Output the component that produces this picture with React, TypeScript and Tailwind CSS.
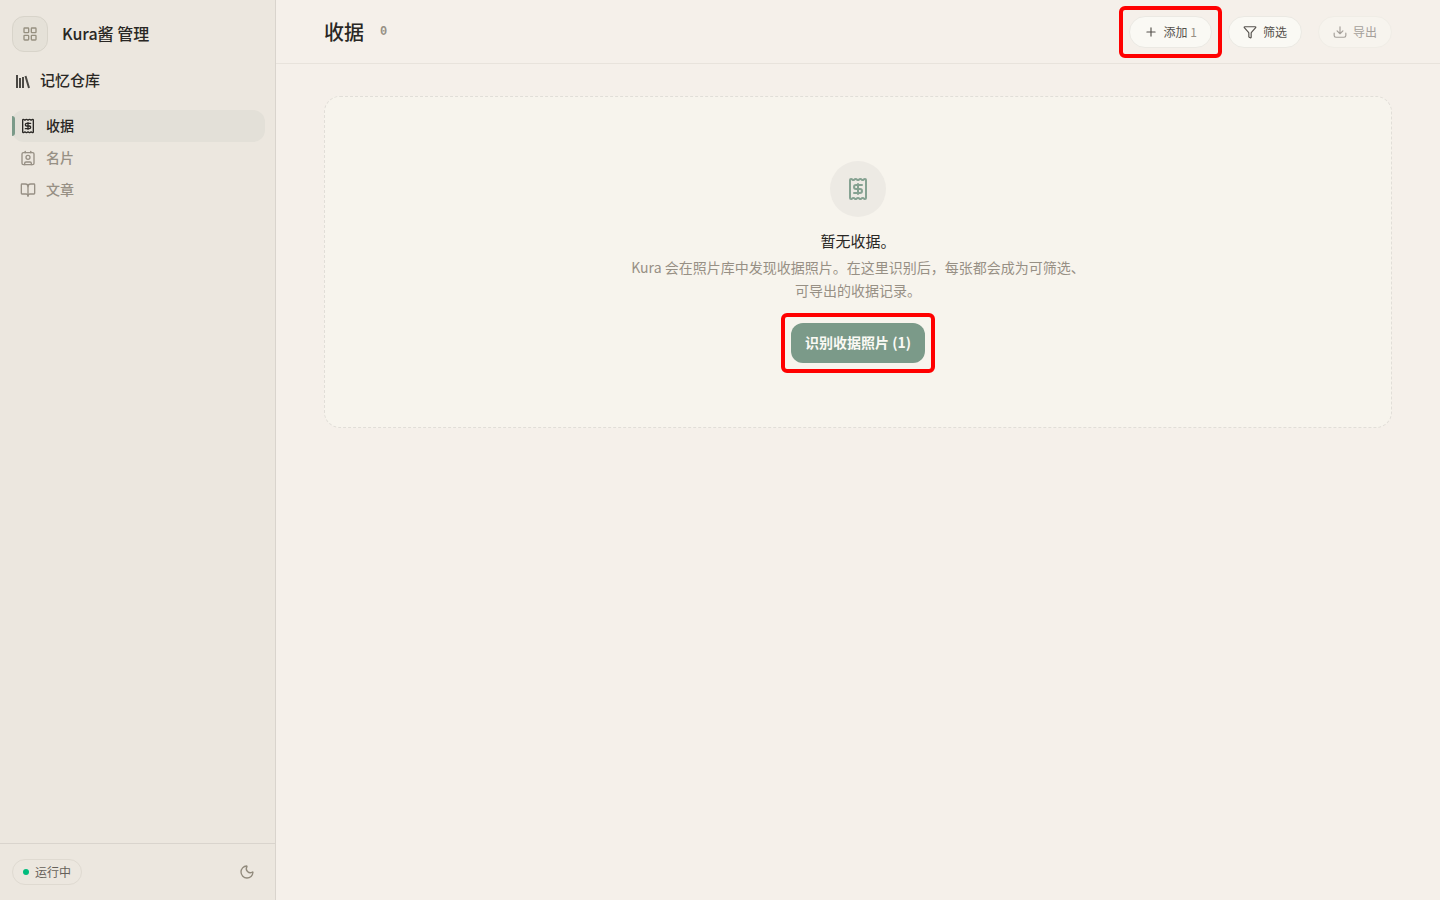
import { BookOpen, Funnel, LayoutGrid, Moon, Plus } from 'lucide-react'
import type { ReactNode } from 'react'

function ReceiptIcon({ className }: { className: string }) {
  return (
    <svg viewBox="0 0 24 24" fill="none" stroke="currentColor" strokeWidth="2" strokeLinecap="round" strokeLinejoin="round" className={className} aria-hidden="true">
      <path d="M4 3a1 1 0 0 1 1-1 1.3 1.3 0 0 1 .7.2l.93.6a1.3 1.3 0 0 0 1.4 0l.93-.6a1.3 1.3 0 0 1 1.4 0l.93.6a1.3 1.3 0 0 0 1.4 0l.93-.6a1.3 1.3 0 0 1 1.4 0l.93.6a1.3 1.3 0 0 0 1.4 0l.93-.6A1.3 1.3 0 0 1 19 2a1 1 0 0 1 1 1v18a1 1 0 0 1-1 1 1.3 1.3 0 0 1-.7-.2l-.93-.6a1.3 1.3 0 0 0-1.4 0l-.93.6a1.3 1.3 0 0 1-1.4 0l-.93-.6a1.3 1.3 0 0 0-1.4 0l-.93.6a1.3 1.3 0 0 1-1.4 0l-.93-.6a1.3 1.3 0 0 0-1.4 0l-.93.6a1.3 1.3 0 0 1-.7.2 1 1 0 0 1-1-1z" />
      <path d="M12 17V7" />
      <path d="M16 8h-6a2 2 0 0 0 0 4h4a2 2 0 0 1 0 4H8" />
    </svg>
  )
}

function CardIcon({ className }: { className: string }) {
  return (
    <svg viewBox="0 0 24 24" fill="none" stroke="currentColor" strokeWidth="2" strokeLinecap="round" strokeLinejoin="round" className={className} aria-hidden="true">
      <path d="M16 2v2" />
      <path d="M7 22v-2a2 2 0 0 1 2-2h6a2 2 0 0 1 2 2v2" />
      <path d="M8 2v2" />
      <circle cx="12" cy="11" r="3" />
      <rect x="3" y="4" width="18" height="18" rx="2" />
    </svg>
  )
}

function ShelfIcon({ className }: { className: string }) {
  return (
    <svg viewBox="0 0 16 16" fill="none" stroke="currentColor" strokeWidth="2" className={className} aria-hidden="true">
      <path d="M3 2v13M6 5v10M9 4v11M11.5 3l3.5 12" />
    </svg>
  )
}

function ExportIcon({ className }: { className: string }) {
  return (
    <svg viewBox="0 0 24 24" fill="none" stroke="currentColor" strokeWidth="2" strokeLinecap="round" strokeLinejoin="round" className={className} aria-hidden="true">
      <path d="M12 3v12M7 10l5 5 5-5" />
      <path d="M2 14v4a3 3 0 0 0 3 3h14a3 3 0 0 0 3-3v-4" />
    </svg>
  )
}

const navItems = [
  { label: '收据', icon: ReceiptIcon, active: true },
  { label: '名片', icon: CardIcon, active: false },
  { label: '文章', icon: BookOpen, active: false },
]

function Highlight({ children }: { children: ReactNode }) {
  return <div className="rounded-md border-4 border-[#ff0000] p-1.5">{children}</div>
}

function Sidebar() {
  return (
    <aside className="flex w-[276px] shrink-0 flex-col border-r border-[#d9d4cd] bg-[#ece7df]">
      <div className="flex items-center gap-3.5 px-3 pt-4">
        <button aria-label="应用" className="flex size-9 items-center justify-center rounded-xl border border-[#d8d4ca] bg-[#e5e1d8] text-[#969080]">
          <LayoutGrid className="size-4" />
        </button>
        <h1 className="pb-0.5 text-base leading-6 font-medium">Kura酱 管理</h1>
      </div>
      <h2 className="mt-4 flex items-center gap-2.5 px-3.5 text-[15px] leading-6 font-medium">
        <ShelfIcon className="size-4 text-[#4b4944]" />
        <span className="pb-0.5">记忆仓库</span>
      </h2>
      <nav className="mt-4 px-3 pr-2.5">
        {navItems.map(({ label, icon: Icon, active }) => (
          <a
            key={label}
            href="#"
            aria-current={active ? 'page' : undefined}
            className={`relative flex h-8 items-center gap-2.5 rounded-xl px-2 text-sm font-medium ${active ? 'bg-[#e3e0d8] text-[#292724]' : 'text-[#979085]'}`}
          >
            {active && <span className="absolute top-1.5 left-0 h-5 w-[3px] rounded-r-sm bg-[#7b9a89]" />}
            <Icon className="size-4" />
            <span className="pb-0.5">{label}</span>
          </a>
        ))}
      </nav>
      <footer className="mt-auto flex h-[57px] items-center justify-between border-t border-[#d9d4cd] px-3">
        <span className="flex h-[26px] items-center gap-1.5 rounded-full border border-[#dfdad1] px-2.5 text-xs text-[#66615a]">
          <span className="size-1.5 rounded-full bg-[#00bc7d]" />
          运行中
        </span>
        <button aria-label="深色模式" className="flex size-8 items-center justify-center text-[#918a7c]">
          <Moon className="size-4" />
        </button>
      </footer>
    </aside>
  )
}

function Header() {
  return (
    <header className="flex h-16 items-center border-b border-[#e8e3dc] px-12">
      <h2 className="text-xl leading-7 font-medium">收据</h2>
      <span className="ml-4 font-['Liberation_Mono',monospace] text-xs font-bold text-[#979085]">0</span>
      <div className="ml-auto flex items-center">
        <Highlight>
          <button className="flex h-8 items-center gap-1.5 rounded-full border border-[#ebe9e3] bg-[#faf9f4] px-3.5 text-xs text-[#55514c]">
            <Plus className="size-3.5" />
            <span>
              添加 <span className="text-[#979085]">1</span>
            </span>
          </button>
        </Highlight>
        <button className="ml-1.5 flex h-8 items-center gap-1.5 rounded-full border border-[#ebe9e3] bg-[#faf9f4] px-3.5 text-xs text-[#55514c]">
          <Funnel className="size-3.5" />
          筛选
        </button>
        <button disabled className="ml-4 flex h-8 items-center gap-1.5 rounded-full border border-[#f0ede6] bg-[#f7f4ee] px-3.5 text-xs text-[#a5a09a]">
          <ExportIcon className="size-3.5" />
          导出
        </button>
      </div>
    </header>
  )
}

export default function App() {
  return (
    <div className="flex min-h-screen bg-[#f5f0ea] font-['Noto_Sans_CJK_SC',sans-serif] text-[#292724]">
      <Sidebar />
      <div className="min-w-0 flex-1">
        <Header />
        <main className="px-12 py-8">
          <section className="flex flex-col items-center rounded-2xl border border-dashed border-[#e1ded8] bg-[#f7f4ed] px-6 pt-16 pb-[54px] text-center">
            <div className="flex size-14 items-center justify-center rounded-full bg-[#edeae4] text-[#86a292]">
              <ReceiptIcon className="size-6" />
            </div>
            <h3 className="mt-3 text-[15px] leading-6">暂无收据。</h3>
            <p className="mt-[3px] max-w-[460px] text-sm leading-[23px] text-[#979085]">
              Kura 会在照片库中发现收据照片。在这里识别后，每张都会成为可筛选、可导出的收据记录。
            </p>
            <div className="mt-[11px]">
              <Highlight>
                <button className="h-10 rounded-xl bg-[#7b9a89] px-3.5 pb-0.5 text-sm font-bold text-[#faf9f4]">识别收据照片 (1)</button>
              </Highlight>
            </div>
          </section>
        </main>
      </div>
    </div>
  )
}
